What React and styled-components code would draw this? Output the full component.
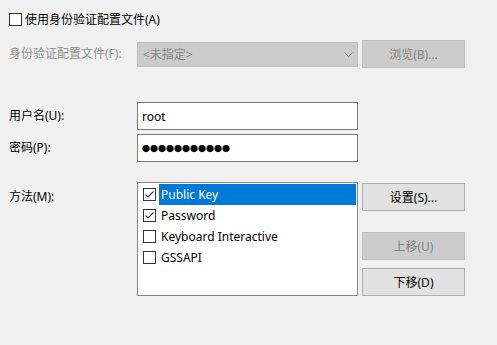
import React from "react";
import styled, { createGlobalStyle } from "styled-components";

const GlobalStyle = createGlobalStyle`
  html, body { margin: 0; padding: 0; background: #f0f0f0; }
  body {
    font-family: "Noto Sans", "Noto Sans CJK SC", sans-serif;
    font-size: 12px;
    color: #000;
  }
  * { box-sizing: border-box; }
`;

const Page = styled.div`
  width: 497px;
  height: 345px;
  background: #f0f0f0;
  padding: 13px 0 0 9px;
  display: flex;
  flex-direction: column;
  overflow: hidden;
`;

const TopCheck = styled.label`
  display: flex;
  align-items: center;
  gap: 3px;
  height: 13px;
  line-height: 13px;
  white-space: nowrap;
`;

const Box = styled.span`
  width: 13px;
  height: 13px;
  flex: none;
  border: 1px solid #333333;
  background: #ffffff;
  display: flex;
  align-items: center;
  justify-content: center;
`;

const FieldRow = styled.div`
  display: grid;
  grid-template-columns: 128px 221px 107px;
  align-items: ${(p) => p.$align || "center"};
  margin-top: ${(p) => p.$mt}px;
`;

const Label = styled.span`
  color: ${(p) => (p.$disabled ? "#8f8f8f" : "#000")};
  white-space: nowrap;
  line-height: 16px;
  padding-top: ${(p) => p.$pt || 0}px;
`;

const Combo = styled.div`
  height: 25px;
  border: 1px solid #bfbfbf;
  background: #cccccc;
  color: #838383;
  display: flex;
  align-items: center;
  justify-content: space-between;
  padding: 0 4px 0 5px;
`;

const Button = styled.div`
  height: 28px;
  width: 103px;
  border: 1px solid ${(p) => (p.$disabled ? "#bfbfbf" : "#adadad")};
  background: ${(p) => (p.$disabled ? "#cccccc" : "#e1e1e1")};
  color: ${(p) => (p.$disabled ? "#838383" : "#000")};
  display: flex;
  align-items: center;
  justify-content: center;
  margin-top: ${(p) => p.$mt || 0}px;
  margin-left: 4px;
  white-space: nowrap;
`;

const TextBox = styled.div`
  height: 28px;
  border: 1px solid #7a7a7a;
  background: #ffffff;
  display: flex;
  align-items: center;
  padding-left: 4px;
  letter-spacing: ${(p) => p.$spacing || 0}px;
  font-size: ${(p) => p.$size || 12}px;
`;

const List = styled.div`
  height: 114px;
  border: 1px solid #828790;
  background: #ffffff;
  padding-top: 1px;
  display: flex;
  flex-direction: column;
`;

const Item = styled.div`
  height: 21px;
  display: flex;
  align-items: center;
  padding-left: 5px;
  padding-right: 1px;
`;

const ItemText = styled.span`
  flex: 1;
  height: 21px;
  line-height: 21px;
  margin-left: 3px;
  padding: 0 2px;
  background: ${(p) => (p.$selected ? "#0078d7" : "transparent")};
  color: ${(p) => (p.$selected ? "#ffffff" : "#000")};
  white-space: nowrap;
`;

const ButtonColumn = styled.div`
  display: flex;
  flex-direction: column;
`;

const Check = () => (
  <svg width="11" height="11" viewBox="0 0 11 11">
    <polyline points="1.5,5.5 4,8 9.5,2.5" fill="none" stroke="#333333" strokeWidth="1.1" />
  </svg>
);

const Chevron = () => (
  <svg width="9" height="5" viewBox="0 0 9 5">
    <polyline points="0.5,0.5 4.5,4.5 8.5,0.5" fill="none" stroke="#8c8c8c" strokeWidth="1" />
  </svg>
);

const methods = [
  { name: "Public Key", checked: true, selected: true },
  { name: "Password", checked: true },
  { name: "Keyboard Interactive", checked: false },
  { name: "GSSAPI", checked: false },
];

export default function App() {
  return (
    <>
      <GlobalStyle />
      <Page>
        <TopCheck>
          <Box />
          使用身份验证配置文件(A)
        </TopCheck>

        <FieldRow $mt={14}>
          <Label $disabled>身份验证配置文件(F):</Label>
          <Combo>
            <span>&lt;未指定&gt;</span>
            <Chevron />
          </Combo>
          <Button $disabled>浏览(B)...</Button>
        </FieldRow>

        <FieldRow $mt={34}>
          <Label>用户名(U):</Label>
          <TextBox>root</TextBox>
        </FieldRow>

        <FieldRow $mt={4}>
          <Label>密码(P):</Label>
          <TextBox $size={8}>●●●●●●●●●●●</TextBox>
        </FieldRow>

        <FieldRow $mt={20} $align="start">
          <Label $pt={7}>方法(M):</Label>
          <List>
            {methods.map((m) => (
              <Item key={m.name}>
                <Box>{m.checked && <Check />}</Box>
                <ItemText $selected={m.selected}>{m.name}</ItemText>
              </Item>
            ))}
          </List>
          <ButtonColumn>
            <Button $mt={1}>设置(S)...</Button>
            <Button $mt={21} $disabled>上移(U)</Button>
            <Button $mt={8}>下移(D)</Button>
          </ButtonColumn>
        </FieldRow>
      </Page>
    </>
  );
}
